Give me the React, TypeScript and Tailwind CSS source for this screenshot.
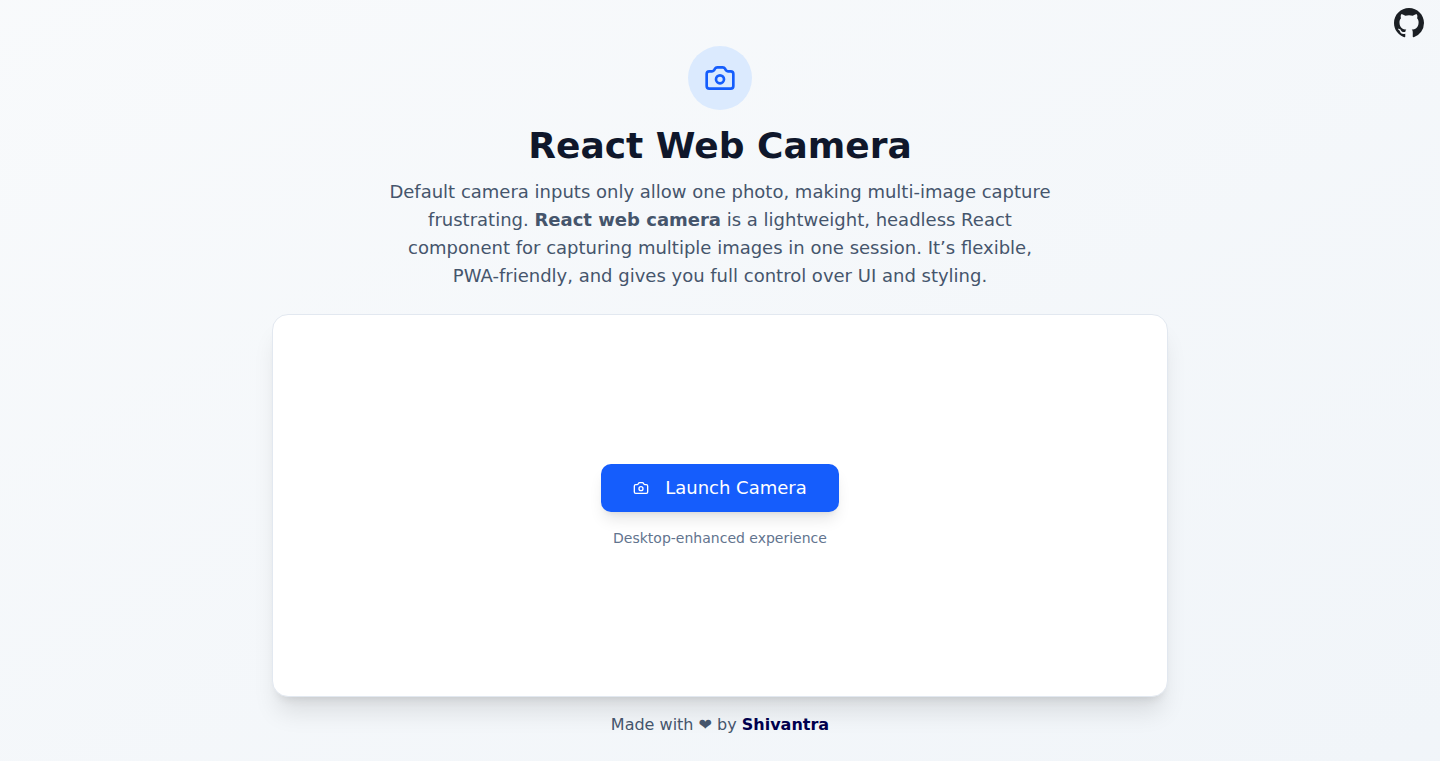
import { Camera } from 'lucide-react';
import { BsGithub } from 'react-icons/bs';

export default function App() {
  return (
    <div className="relative flex min-h-screen flex-col items-center bg-linear-to-br from-slate-50 to-slate-100 px-4 pt-[46px] pb-6 font-['DejaVu_Sans',sans-serif]">
      <a href="https://github.com" aria-label="GitHub" className="absolute top-2 right-4">
        <BsGithub className="size-[30px] text-[#1b1f24]" />
      </a>

      <header className="flex max-w-2xl flex-col items-center text-center">
        <div className="mb-4 flex size-16 items-center justify-center rounded-full bg-blue-100">
          <Camera className="size-8 text-blue-600" />
        </div>
        <h1 className="mb-3 text-4xl font-bold text-slate-900">React Web Camera</h1>
        <p className="text-lg text-slate-600">
          Default camera inputs only allow one photo, making multi-image capture frustrating.{' '}
          <strong className="font-semibold">React web camera</strong> is a lightweight, headless React component for
          capturing multiple images in one session. It’s flexible, PWA-friendly, and gives you full control over UI and
          styling.
        </p>
      </header>

      <main className="mt-6 flex w-full max-w-4xl grow flex-col items-center justify-center rounded-2xl border border-slate-200 bg-white shadow-xl">
        <button
          type="button"
          className="flex h-12 items-center gap-4 rounded-[10px] bg-blue-600 px-8 text-lg font-medium text-white shadow-lg"
        >
          <Camera className="size-4" />
          Launch Camera
        </button>
        <p className="mt-4 text-sm text-slate-500">Desktop-enhanced experience</p>
      </main>

      <footer className="mt-4 text-slate-600">
        Made with ❤ by{' '}
        <a href="https://shivantra.com" className="font-semibold text-[#00004d]">
          Shivantra
        </a>
      </footer>
    </div>
  );
}
